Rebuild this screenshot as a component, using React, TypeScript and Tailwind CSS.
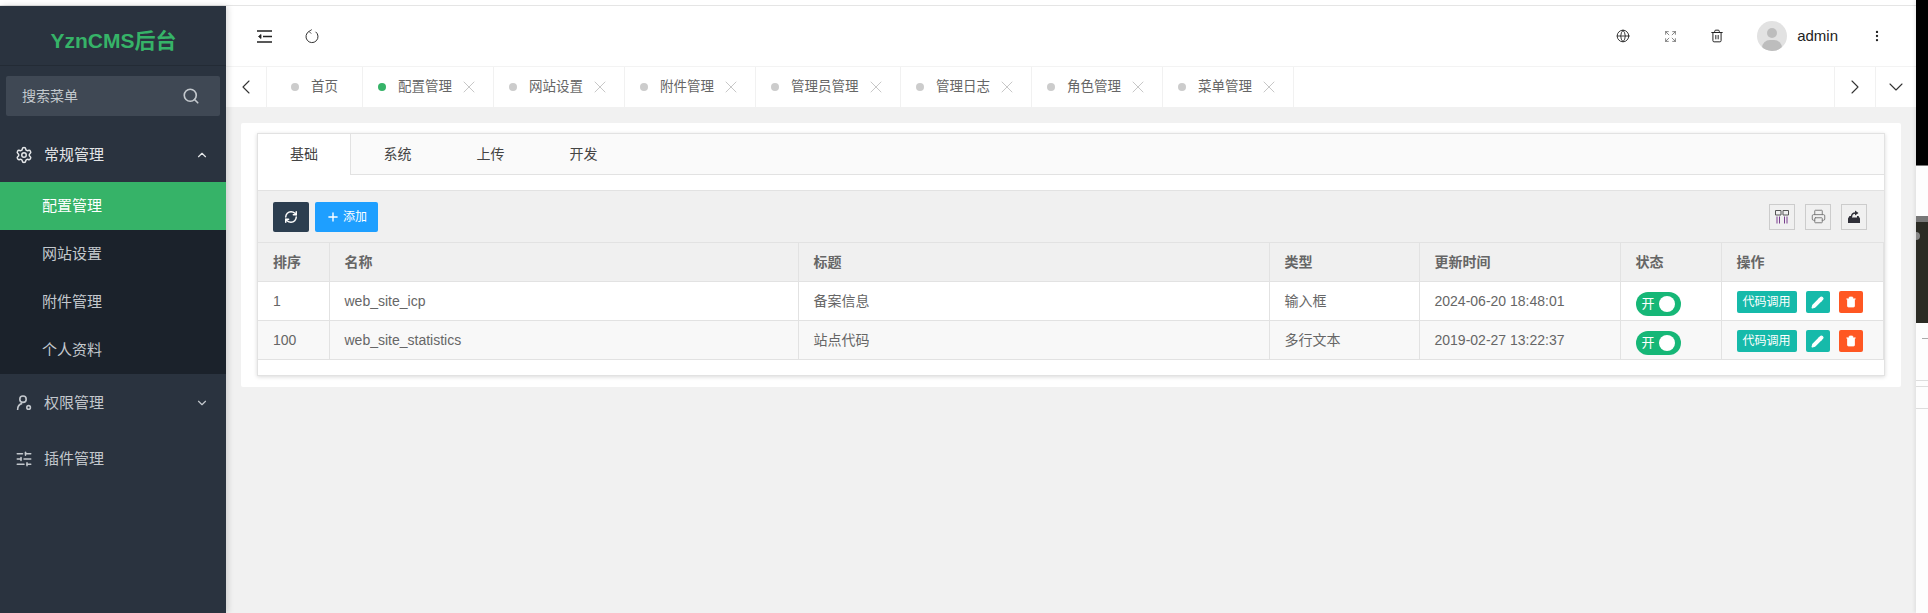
import { ChevronDown, ChevronLeft, ChevronRight, ChevronUp, Expand, Globe, MoreVertical, Pencil, Plus, Printer, RefreshCw, Search, Settings, SlidersHorizontal, Trash2, X } from 'lucide-react'

const FONT = "font-['Liberation_Sans','Noto_Sans_CJK_SC',sans-serif]"

const TABS = [
  { label: '配置管理', active: true, w: 'w-[131px]' },
  { label: '网站设置', w: 'w-[131px]' },
  { label: '附件管理', w: 'w-[131px]' },
  { label: '管理员管理', w: 'w-[145px]' },
  { label: '管理日志', w: 'w-[131px]' },
  { label: '角色管理', w: 'w-[131px]' },
  { label: '菜单管理', w: 'w-[131px]' },
]

const ROWS = [
  { sort: '1', name: 'web_site_icp', title: '备案信息', type: '输入框', time: '2024-06-20 18:48:01', bg: 'bg-white' },
  { sort: '100', name: 'web_site_statistics', title: '站点代码', type: '多行文本', time: '2019-02-27 13:22:37', bg: 'bg-[#f8f8f8]' },
]

function CollapseIcon() {
  return (
    <svg width="15" height="13" viewBox="0 0 15 13" fill="none" stroke="#222" strokeWidth="1.5">
      <path d="M0 1h15M6 6.5h9M0 12h15" />
      <path d="M4 4.5 1.5 6.5 4 8.5z" fill="#222" strokeWidth="0.8" />
    </svg>
  )
}

function ReloadIcon() {
  return (
    <svg width="15" height="15" viewBox="0 0 15 15" fill="none" stroke="#333" strokeWidth="1">
      <path d="M5 2.400a6 6 0 1 0 6.600.4" />
      <path d="M7.800 0.600 5 2.400l2.200 2.200" strokeWidth="0.9" />
    </svg>
  )
}

function PermIcon() {
  return (
    <svg width="16" height="16" viewBox="0 0 16 16" fill="none" stroke="#c3c8cd" strokeWidth="1.6">
      <circle cx="7" cy="4.200" r="3.200" />
      <path d="M1.600 15c0-3.600 1.800-6 4.600-6.600" />
      <circle cx="12.600" cy="12.400" r="1.800" />
    </svg>
  )
}

function ColumnsIcon() {
  return (
    <svg width="14" height="14" viewBox="0 0 14 14" fill="none" stroke="#555" strokeWidth="1">
      <path d="M0.500 0.500h5.500v4.500h-5.500zM8 0.500h5.500v4.500h-5.500z" />
      <path d="M2 6.500v7M4.500 6.500v7M9.500 6.500v7M12 6.500v7" stroke="#7a3f8f" />
    </svg>
  )
}

function ExportIcon() {
  return (
    <svg width="14" height="14" viewBox="0 0 14 14" fill="none">
      <path d="M1 8.500 2.500 6H5v1.500H10V6h1.500L13 8.500v4.500H1z" fill="#2f2f38" />
      <path d="M4.500 7c0-2.500 1.500-4 4-4" stroke="#2f2f38" strokeWidth="1.400" />
      <path d="M8 0.500 11.500 3 8 5.500z" fill="#2f2f38" />
    </svg>
  )
}

function Avatar() {
  return (
    <div className="relative h-[30px] w-[30px] overflow-hidden rounded-full bg-[#e2e2e2]">
      <div className="absolute left-[10px] top-[7px] h-[10px] w-[10px] rounded-full bg-[#bdbdbd]" />
      <div className="absolute left-[5px] top-[19px] h-[16px] w-[20px] rounded-full bg-[#bdbdbd]" />
    </div>
  )
}

function Sidebar() {
  return (
    <aside className="z-10 flex w-[226px] shrink-0 flex-col bg-[#2a333f] shadow-[2px_0_6px_rgba(0,0,0,0.15)]">
      <div className="flex h-[60px] items-center justify-center border-b border-[#232b35] pl-[1px] pt-[10px] text-[21px] font-bold text-[#36b368]">
        YznCMS后台
      </div>
      <div className="mx-[6px] mt-[10px] flex h-[40px] items-center justify-between rounded-[2px] bg-[#3f4854] pl-[16px] pr-[20px] text-[14px] text-[#c3c8cd]">
        搜索菜单
        <Search size={18} strokeWidth={2.2} className="text-[#c3c8cd]" />
      </div>
      <nav className="mt-[12px] text-[15px] text-[#c3c8cd]">
        <div className="flex h-[54px] items-center pl-[15px] pr-[17px] text-[#e4e6e8]">
          <Settings size={18} strokeWidth={2} className="mr-[11px]" />
          <span className="flex-1">常规管理</span>
          <ChevronUp size={14} />
        </div>
        <div className="bg-[#1b222b]">
          <div className="flex h-[48px] items-center bg-[#36b368] pl-[42px] text-white">配置管理</div>
          <div className="flex h-[48px] items-center pl-[42px]">网站设置</div>
          <div className="flex h-[48px] items-center pl-[42px]">附件管理</div>
          <div className="flex h-[48px] items-center pl-[42px]">个人资料</div>
        </div>
        <div className="flex h-[58px] items-center pl-[16px] pr-[17px]">
          <PermIcon />
          <span className="ml-[12px] flex-1">权限管理</span>
          <ChevronDown size={14} />
        </div>
        <div className="flex h-[54px] items-center pl-[15px] pr-[17px]">
          <SlidersHorizontal size={18} strokeWidth={2} className="mr-[11px]" />
          <span className="flex-1">插件管理</span>
        </div>
      </nav>
    </aside>
  )
}

function Header() {
  return (
    <header className="flex h-[60px] items-center bg-white pl-[31px] pr-[32px]">
      <CollapseIcon />
      <div className="ml-[32px]">
        <ReloadIcon />
      </div>
      <div className="ml-auto flex items-center text-[#222]">
        <Globe size={14} strokeWidth={1.5} />
        <Expand size={13} strokeWidth={1.3} className="ml-[34px] text-[#555]" />
        <Trash2 size={14} strokeWidth={1.7} className="ml-[33px]" />
        <div className="ml-[33px]">
          <Avatar />
        </div>
        <span className="ml-[10px] text-[15px]">admin</span>
        <MoreVertical size={14} strokeWidth={2} className="ml-[32px]" />
      </div>
    </header>
  )
}

function TabBar() {
  return (
    <div className="flex h-[41px] border-t border-[#f3f3f3] bg-white text-[13.5px] text-[#666]">
      <div className="flex w-[41px] items-center justify-center border-r border-[#f1f1f1] text-[#333]">
        <ChevronLeft size={24} strokeWidth={1.1} />
      </div>
      <div className="flex w-[96px] items-center border-r border-[#f1f1f1] pl-[24px]">
        <span className="mr-[12px] h-[8px] w-[8px] rounded-full bg-[#ccc]" />
        首页
      </div>
      {TABS.map((t) => (
        <div key={t.label} className={`flex items-center border-r border-[#f1f1f1] pl-[15px] ${t.w}`}>
          <span className={`mr-[12px] h-[8px] w-[8px] rounded-full ${t.active ? 'bg-[#36b368]' : 'bg-[#ccc]'}`} />
          {t.label}
          <X size={20} strokeWidth={0.8} className="ml-[7px] text-[#aaa]" />
        </div>
      ))}
      <div className="ml-auto flex w-[41px] items-center justify-center border-l border-[#f1f1f1] text-[#333]">
        <ChevronRight size={24} strokeWidth={1.1} />
      </div>
      <div className="flex w-[41px] items-center justify-center border-l border-[#f1f1f1] text-[#333]">
        <ChevronDown size={24} strokeWidth={1.1} />
      </div>
    </div>
  )
}

function ToolBtn({ children }: { children: React.ReactNode }) {
  return <div className="flex h-[26px] w-[26px] items-center justify-center border border-[#ccc]">{children}</div>
}

function Th({ children }: { children: React.ReactNode }) {
  return <th className="h-[39px] border-r border-b border-[#e2e2e2] px-[15px] text-left text-[14px] font-bold text-[#666]">{children}</th>
}

function Td({ children }: { children: React.ReactNode }) {
  return <td className="h-[39px] border-r border-b border-[#e2e2e2] px-[15px] text-[14px] text-[#666]">{children}</td>
}

function Switch() {
  return (
    <div className="mt-[5px] flex h-[24px] w-[45px] items-center justify-between rounded-full bg-[#16b777] pl-[6px] pr-[6px] text-[13px] text-white">
      开
      <span className="h-[16px] w-[16px] rounded-full bg-white" />
    </div>
  )
}

function Actions() {
  return (
    <div className="mt-[2px] flex items-center gap-[9px]">
      <div className="flex h-[22px] w-[60px] items-center justify-center rounded-[2px] bg-[#16baaa] text-[12px] text-white">代码调用</div>
      <div className="flex h-[22px] w-[24px] items-center justify-center rounded-[2px] bg-[#16baaa]">
        <Pencil size={13} fill="#fff" stroke="#fff" />
      </div>
      <div className="flex h-[22px] w-[24px] items-center justify-center rounded-[2px] bg-[#ff5722]">
        <Trash2 size={12} fill="#fff" stroke="#fff" strokeWidth={1.5} />
      </div>
    </div>
  )
}

function ConfigPanel() {
  return (
    <div className="border border-[#e2e2e2] bg-white shadow-[0_1px_4px_rgba(0,0,0,0.15)]">
      <div className="flex h-[41px] border-b border-[#e2e2e2] bg-[#fafafa] text-[14px] text-[#444]">
        <div className="-mb-px flex w-[93px] items-center justify-center border-r border-[#e2e2e2] bg-white">基础</div>
        <div className="flex w-[93px] items-center justify-center">系统</div>
        <div className="flex w-[93px] items-center justify-center">上传</div>
        <div className="flex w-[93px] items-center justify-center">开发</div>
      </div>
      <div className="mt-[15px] border-t border-[#e2e2e2]">
        <div className="flex h-[51px] items-center bg-[#f0f0f0] pl-[15px] pr-[17px]">
          <div className="flex h-[30px] w-[36px] items-center justify-center rounded-[2px] bg-[#2c3e50]">
            <RefreshCw size={14} strokeWidth={2.5} className="text-white" />
          </div>
          <div className="ml-[6px] flex h-[30px] w-[63px] items-center justify-center rounded-[2px] bg-[#1e9fff] text-[12px] text-white">
            <Plus size={14} strokeWidth={2.4} className="mr-[3px]" />
            添加
          </div>
          <div className="ml-auto flex gap-[10px]">
            <ToolBtn><ColumnsIcon /></ToolBtn>
            <ToolBtn><Printer size={15} strokeWidth={1.5} className="text-[#777]" /></ToolBtn>
            <ToolBtn><ExportIcon /></ToolBtn>
          </div>
        </div>
        <table className="w-full table-fixed border-collapse border-t border-[#e2e2e2]">
          <colgroup>
            <col className="w-[71px]" />
            <col className="w-[469px]" />
            <col className="w-[471px]" />
            <col className="w-[150px]" />
            <col className="w-[201px]" />
            <col className="w-[101px]" />
            <col />
          </colgroup>
          <thead>
            <tr className="bg-[#f0f0f0]">
              <Th>排序</Th>
              <Th>名称</Th>
              <Th>标题</Th>
              <Th>类型</Th>
              <Th>更新时间</Th>
              <Th>状态</Th>
              <Th>操作</Th>
            </tr>
          </thead>
          <tbody>
            {ROWS.map((r) => (
              <tr key={r.sort} className={r.bg}>
                <Td>{r.sort}</Td>
                <Td>{r.name}</Td>
                <Td>{r.title}</Td>
                <Td>{r.type}</Td>
                <Td>{r.time}</Td>
                <Td><Switch /></Td>
                <Td><Actions /></Td>
              </tr>
            ))}
          </tbody>
        </table>
        <div className="h-[15px]" />
      </div>
    </div>
  )
}

// sliver of another window showing at the right edge of the capture
function RightEdge() {
  return (
    <div className="flex w-[12px] shrink-0 flex-col overflow-hidden bg-[#fdfdfd] shadow-[-2px_0_3px_rgba(0,0,0,0.06)]">
      <div className="h-[166px] border-b border-[#777] bg-black" />
      <div className="h-[50px]" />
      <div className="h-[6px] bg-[#777]" />
      <div className="relative h-[101px] overflow-hidden bg-[#2b2b24]">
        <div className="absolute -left-[4px] top-[10px] h-[8px] w-[8px] rounded-full bg-[#888]" />
      </div>
      <div className="ml-[6px] mt-[15px] h-px bg-[#aaa]" />
      <div className="mt-[41px] h-px bg-[#ddd]" />
      <div className="mt-[5px] h-px bg-[#ddd]" />
      <div className="mt-[21px] h-px bg-[#ddd]" />
    </div>
  )
}

export default function App() {
  return (
    <div className={`flex h-[613px] w-full overflow-hidden bg-white ${FONT}`}>
      <div className="flex min-w-0 flex-1 flex-col">
        <div className="h-[6px] shrink-0 border-b border-[#e5e5e5] bg-white" />
        <div className="flex min-h-0 flex-1">
          <Sidebar />
          <main className="min-w-0 flex-1 bg-[#f1f1f1]">
            <Header />
            <TabBar />
            <div className="px-[15px] pt-[16px]">
              <div className="rounded-[2px] bg-white px-[16px] pb-[11px] pt-[10px]">
                <ConfigPanel />
              </div>
            </div>
          </main>
        </div>
      </div>
      <RightEdge />
    </div>
  )
}
